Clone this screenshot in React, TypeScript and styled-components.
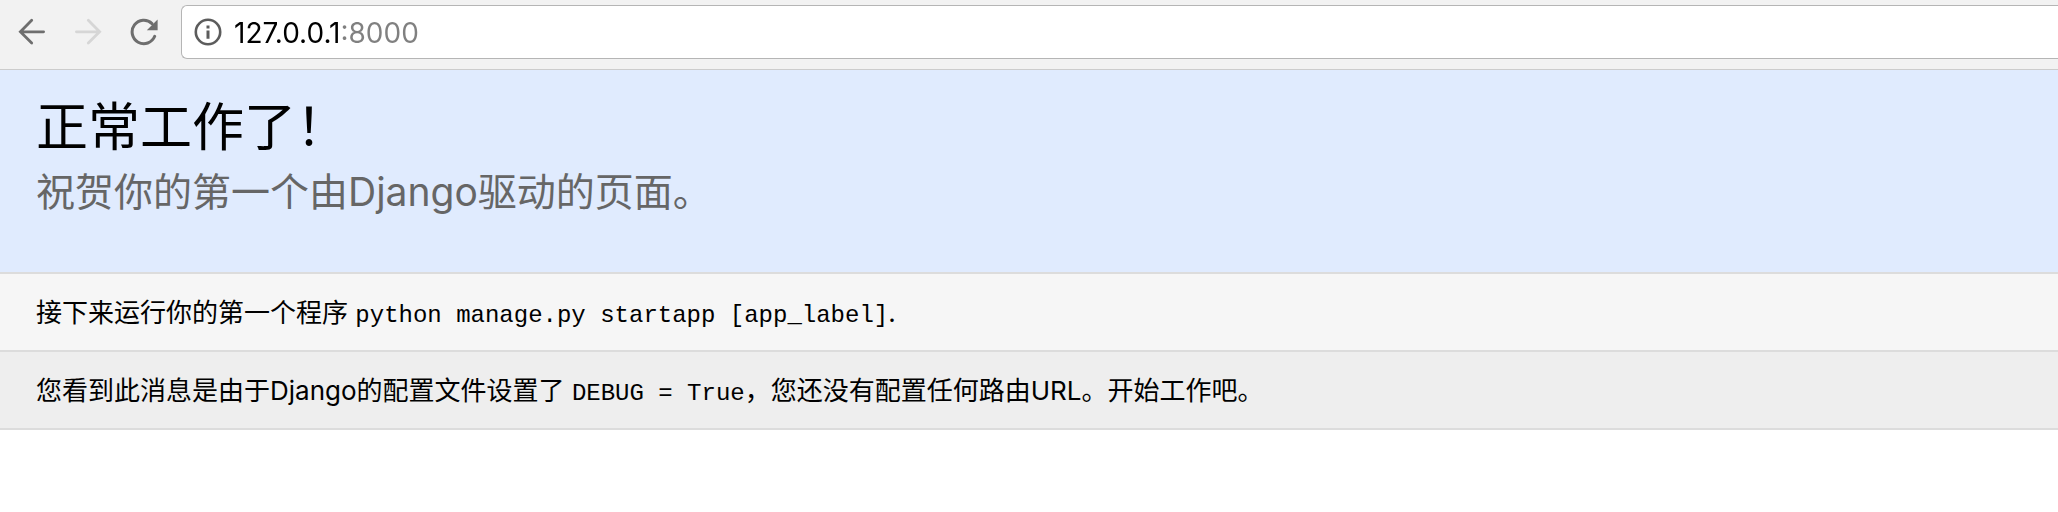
import React from "react";
import styled, { createGlobalStyle } from "styled-components";

const sans = `Inter, "Noto Sans CJK SC", sans-serif`;

const GlobalStyle = createGlobalStyle`
  * { box-sizing: border-box; }
  body { margin: 0; background: #fff; color: #000; font-family: ${sans}; }
`;

const Toolbar = styled.nav`
  display: flex;
  align-items: center;
  padding: 5px 0 10px 12px;
  background: #f2f2f2;
  border-bottom: 1px solid #ccc;
`;

const Buttons = styled.div`
  display: flex;
  gap: 16px;
  margin-right: 17px;
`;

const IconButton = styled.button`
  display: flex;
  align-items: center;
  justify-content: center;
  width: 40px;
  height: 40px;
  padding: 0;
  border: 0;
  background: transparent;
  color: #6e6e6e;

  &:disabled {
    color: #d6d6d6;
  }
`;

const AddressBar = styled.label`
  display: flex;
  flex: 1;
  align-items: center;
  gap: 12px;
  height: 54px;
  padding-left: 12px;
  border: 1px solid #b5b5b5;
  border-right: 0;
  border-radius: 6px 0 0 6px;
  background: #fff;
  color: #5c5c5c;
`;

/* The host part of the address is black, the port after it grey. */
const Address = styled.input`
  flex: 1;
  min-width: 0;
  height: 40px;
  padding: 2px 0 0;
  border: 0;
  outline: 0;
  background: linear-gradient(90deg, #000 107px, #808080 107px);
  -webkit-background-clip: text;
  background-clip: text;
  color: transparent;
  font-family: ${sans};
  font-size: 28px;
`;

const Summary = styled.header`
  padding: 26px 36px 48px;
  background: #e0ebfe;
  border-bottom: 2px solid #dcdcdc;
`;

const Title = styled.h1`
  margin: 0;
  font-size: 52px;
  line-height: 64px;
  font-weight: 400;
`;

const Subtitle = styled.h2`
  margin: 0;
  font-size: 39px;
  line-height: 64px;
  font-weight: 400;
  color: #666;
`;

const Message = styled.section<{ $tone: string }>`
  padding: 20px 36px 18px;
  background: ${(p) => p.$tone};
  border-bottom: 2px solid #dcdcdc;
`;

const Text = styled.p`
  margin: 0;
  font-size: 26px;
  line-height: 38px;
`;

const Code = styled.code`
  font-family: "Liberation Mono", monospace;
  font-size: 24px;
  line-height: 24px;
`;

function BackIcon() {
  return (
    <svg width="28" height="28" viewBox="0 0 28 28" fill="none" stroke="currentColor" strokeWidth="2.8" strokeLinecap="round">
      <path d="M13.7 2.2 2.4 13.8 13.7 25M2.8 13.8H25.6" />
    </svg>
  );
}

function ForwardIcon() {
  return (
    <svg width="28" height="28" viewBox="0 0 28 28" fill="none" stroke="currentColor" strokeWidth="2.8" strokeLinecap="round">
      <path d="M14.3 2.2 25.6 13.8 14.3 25M25.2 13.8H2.4" />
    </svg>
  );
}

function ReloadIcon() {
  return (
    <svg width="28" height="28" viewBox="0 0 28 28" fill="none" stroke="currentColor" strokeWidth="3" strokeLinecap="round">
      <path d="M24.7 18.3A11.7 11.7 0 1 1 22 5.6" />
      <path d="M27.6 1.4V12.2H16.8Z" fill="currentColor" stroke="none" />
    </svg>
  );
}

function InfoIcon() {
  return (
    <svg width="28" height="28" viewBox="0 0 28 28" fill="currentColor" aria-hidden="true">
      <circle cx="14" cy="14" r="12.2" fill="none" stroke="currentColor" strokeWidth="2.6" />
      <path d="M12.5 7.4h3v3h-3zM12.5 12.4h3v8.4h-3z" />
    </svg>
  );
}

export default function App() {
  return (
    <>
      <GlobalStyle />
      <Toolbar>
        <Buttons>
          <IconButton type="button" aria-label="Back"><BackIcon /></IconButton>
          <IconButton type="button" aria-label="Forward" disabled><ForwardIcon /></IconButton>
          <IconButton type="button" aria-label="Reload"><ReloadIcon /></IconButton>
        </Buttons>
        <AddressBar>
          <InfoIcon />
          <Address type="text" aria-label="Address" defaultValue="127.0.0.1:8000" />
        </AddressBar>
      </Toolbar>
      <main>
        <Summary>
          <Title>正常工作了！</Title>
          <Subtitle>祝贺你的第一个由Django驱动的页面。</Subtitle>
        </Summary>
        <Message $tone="#f6f6f6">
          <Text>
            接下来运行你的第一个程序 <Code>python manage.py startapp [app_label]</Code>.
          </Text>
        </Message>
        <Message $tone="#eee">
          <Text>
            您看到此消息是由于Django的配置文件设置了 <Code>DEBUG = True</Code>，您还没有配置任何路由URL。开始工作吧。
          </Text>
        </Message>
      </main>
    </>
  );
}
